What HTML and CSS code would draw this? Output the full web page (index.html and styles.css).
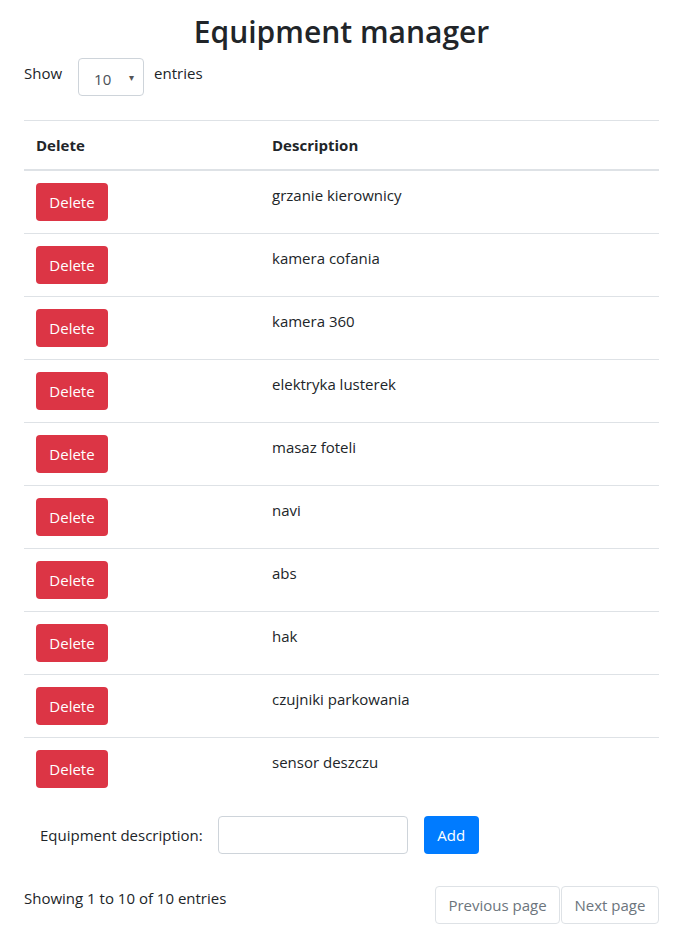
FILE: index.html
```html
<!DOCTYPE html>
<html>
<head>
<meta charset="utf-8">
<link rel="stylesheet" href="styles.css">
</head>
<body>
<div class="page">
  <h2 class="title">Equipment manager</h2>
  <div class="length">
    <span>Show</span>
    <div class="select"><span class="sel-val">10</span><span class="caret">&#9662;</span></div>
    <span>entries</span>
  </div>
  <table class="table">
    <thead>
      <tr><th class="c1">Delete</th><th>Description</th></tr>
    </thead>
    <tbody>
      <tr><td class="c1"><button class="btn-del">Delete</button></td><td>grzanie kierownicy</td></tr>
      <tr><td class="c1"><button class="btn-del">Delete</button></td><td>kamera cofania</td></tr>
      <tr><td class="c1"><button class="btn-del">Delete</button></td><td>kamera 360</td></tr>
      <tr><td class="c1"><button class="btn-del">Delete</button></td><td>elektryka lusterek</td></tr>
      <tr><td class="c1"><button class="btn-del">Delete</button></td><td>masaz foteli</td></tr>
      <tr><td class="c1"><button class="btn-del">Delete</button></td><td>navi</td></tr>
      <tr><td class="c1"><button class="btn-del">Delete</button></td><td>abs</td></tr>
      <tr><td class="c1"><button class="btn-del">Delete</button></td><td>hak</td></tr>
      <tr><td class="c1"><button class="btn-del">Delete</button></td><td>czujniki parkowania</td></tr>
      <tr><td class="c1"><button class="btn-del">Delete</button></td><td>sensor deszczu</td></tr>
    </tbody>
  </table>
  <div class="add-row">
    <label class="add-label">Equipment description:</label>
    <input class="add-input" type="text">
    <button class="btn-add">Add</button>
  </div>
  <div class="footer">
    <span class="info">Showing 1 to 10 of 10 entries</span>
    <div class="pager">
      <button class="pg pg-prev">Previous page</button>
      <button class="pg pg-next">Next page</button>
    </div>
  </div>
</div>
</body>
</html>
```

FILE: styles.css
```css
* { box-sizing: border-box; }
body {
  margin: 0;
  font-family: "Open Sans", "Noto Sans", sans-serif;
  font-size: 15px;
  line-height: 24px;
  color: #212529;
  background: #fff;
}
.page {
  width: 635px;
  margin-left: 24px;
}
.title {
  margin: 12px 0 0;
  text-align: center;
  font-size: 30px;
  font-weight: 600;
  line-height: 40px;
}
.length {
  display: flex;
  align-items: flex-start;
  height: 62px;
  margin-top: 6px;
}
.length span:first-child { margin-top: 3px; }
.length > span:last-child { margin-top: 3px; margin-left: 10px; }
.select {
  margin-left: 16px;
  width: 66px;
  height: 38px;
  border: 1px solid #ced4da;
  border-radius: 4px;
  display: flex;
  align-items: center;
  padding-left: 15px;
}
.sel-val { color: #495057; margin-top: 4px; }
.caret { font-size: 10px; color: #555; margin-left: 18px; }
.table {
  width: 635px;
  border-collapse: collapse;
}
.table th {
  text-align: left;
  font-weight: 700;
  padding: 12px;
  border-top: 1px solid #dee2e6;
  border-bottom: 2px solid #dee2e6;
  height: 49px;
}
.table td {
  padding: 12px;
  vertical-align: top;
  border-top: 1px solid #dee2e6;
  height: 63px;
}
.table tbody tr:first-child td { border-top: none; }
.c1 { width: 236px; }
.btn-del {
  display: block;
  width: 72px;
  height: 38px;
  border: 0;
  border-radius: 4px;
  background: #dc3545;
  color: #fff;
  font-family: inherit;
  font-size: 15px;
  padding: 0;
}
.add-row {
  display: flex;
  align-items: center;
  margin-top: 15px;
  padding-left: 16px;
}
.add-label { margin-right: 15px; }
.add-input {
  width: 190px;
  height: 38px;
  border: 1px solid #ced4da;
  border-radius: 4px;
  margin-right: 16px;
}
.btn-add {
  width: 55px;
  height: 38px;
  border: 0;
  border-radius: 4px;
  background: #007bff;
  color: #fff;
  font-family: inherit;
  font-size: 15px;
}
.footer {
  display: flex;
  justify-content: space-between;
  align-items: flex-start;
  margin-top: 32px;
}
.info { margin-top: 0; }
.pager { display: flex; gap: 1px; }
.pg {
  height: 38px;
  border: 1px solid #dee2e6;
  border-radius: 4px;
  background: #fff;
  color: #6c757d;
  font-family: inherit;
  font-size: 15px;
  padding: 0;
}
.pg-prev { width: 125px; }
.pg-next { width: 98px; }
```
